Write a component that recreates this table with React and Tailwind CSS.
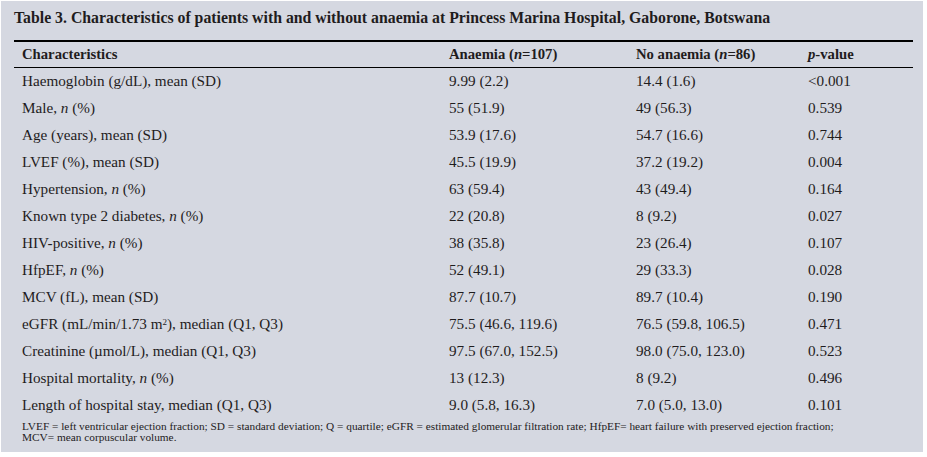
import React from "react";

const rows = [
  [<>Haemoglobin (g/dL), mean (SD)</>, "9.99 (2.2)", "14.4 (1.6)", "<0.001"],
  [<>Male, <i>n</i> (%)</>, "55 (51.9)", "49 (56.3)", "0.539"],
  [<>Age (years), mean (SD)</>, "53.9 (17.6)", "54.7 (16.6)", "0.744"],
  [<>LVEF (%), mean (SD)</>, "45.5 (19.9)", "37.2 (19.2)", "0.004"],
  [<>Hypertension, <i>n</i> (%)</>, "63 (59.4)", "43 (49.4)", "0.164"],
  [<>Known type 2 diabetes, <i>n</i> (%)</>, "22 (20.8)", "8 (9.2)", "0.027"],
  [<>HIV-positive, <i>n</i> (%)</>, "38 (35.8)", "23 (26.4)", "0.107"],
  [<>HfpEF, <i>n</i> (%)</>, "52 (49.1)", "29 (33.3)", "0.028"],
  [<>MCV (fL), mean (SD)</>, "87.7 (10.7)", "89.7 (10.4)", "0.190"],
  [
    <>
      eGFR (mL/min/1.73 m<sup className="text-[9px]">2</sup>), median (Q1, Q3)
    </>,
    "75.5 (46.6, 119.6)",
    "76.5 (59.8, 106.5)",
    "0.471",
  ],
  [<>Creatinine (µmol/L), median (Q1, Q3)</>, "97.5 (67.0, 152.5)", "98.0 (75.0, 123.0)", "0.523"],
  [<>Hospital mortality, <i>n</i> (%)</>, "13 (12.3)", "8 (9.2)", "0.496"],
  [<>Length of hospital stay, median (Q1, Q3)</>, "9.0 (5.8, 16.3)", "7.0 (5.0, 13.0)", "0.101"],
];

const App = () => {
  return (
    <div className="w-[927px] h-[457px] bg-white pt-px pl-px">
      <div
        className="w-[922px] h-[451px] bg-[#d5d8e1] px-[13px] pt-[7px] text-[#1f1c1d]"
        style={{ fontFamily: '"Liberation Serif", "DejaVu Serif", serif' }}
      >
        <div className="text-[15.8px] font-bold leading-[20px] h-[32px] whitespace-nowrap">
          Table 3. Characteristics of patients with and without anaemia at Princess Marina Hospital, Gaborone,
          Botswana
        </div>
        <div className="border-t-2 border-black w-[899px]">
          <div className="grid grid-cols-[427px_187px_172px_1fr] pl-[8px] h-[26px] items-center font-bold text-[14.7px] border-b border-black">
            <div>Characteristics</div>
            <div>
              Anaemia (<i>n</i>=107)
            </div>
            <div>
              No anaemia (<i>n</i>=86)
            </div>
            <div>
              <i>p</i>-value
            </div>
          </div>
          {rows.map((r, i) => (
            <div key={i} className="grid grid-cols-[427px_187px_172px_1fr] pl-[8px] h-[27px] items-center text-[15.2px]">
              <div>{r[0]}</div>
              <div>{r[1]}</div>
              <div>{r[2]}</div>
              <div>{r[3]}</div>
            </div>
          ))}
          <div className="pl-[8px] pt-[2px] text-[11.3px] leading-[11px] whitespace-nowrap">
            LVEF = left ventricular ejection fraction; SD = standard deviation; Q = quartile; eGFR = estimated glomerular
            filtration rate; HfpEF= heart failure with preserved ejection fraction;
            <br />
            MCV= mean corpuscular volume.
          </div>
        </div>
      </div>
    </div>
  );
};

export default App;
